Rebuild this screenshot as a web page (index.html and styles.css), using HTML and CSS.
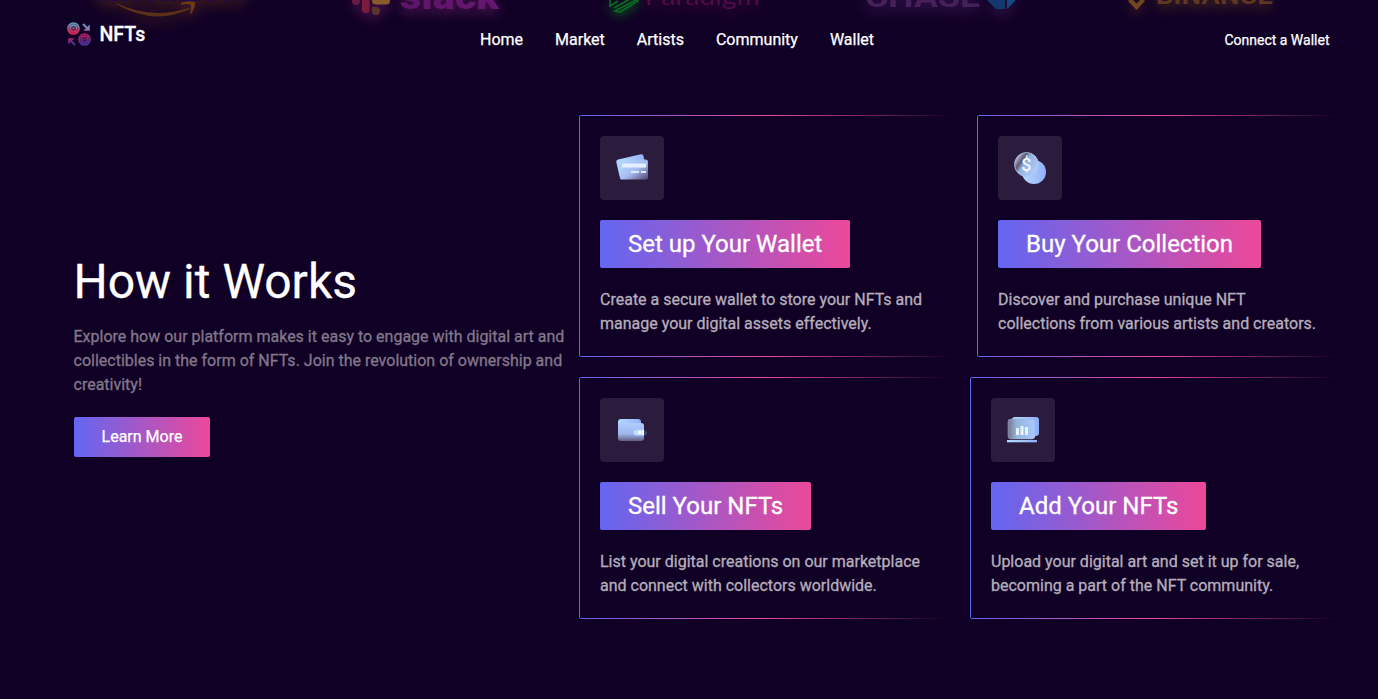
FILE: index.html
```html
<!DOCTYPE html>
<html lang="en">
<head>
<meta charset="utf-8">
<title>NFTs</title>
<link rel="stylesheet" href="styles.css">
</head>
<body>
<svg class="brands" width="1378" height="60" viewBox="0 0 1378 60">
  <defs>
    <linearGradient id="fadeSlack" x1="0" y1="0" x2="1" y2="0"><stop offset="0" stop-color="#5c1568"/><stop offset="1" stop-color="#681670"/></linearGradient>
  </defs>
  <g class="glow-amazon">
    <text x="97" y="1" font-size="40" font-weight="700" textLength="148" lengthAdjust="spacingAndGlyphs" fill="#1f084b">amazon</text>
    <path d="M116 3Q152 20 188 8Q190 7 190 9Q153 26 116 4Z" fill="#5b3019"/>
    <path d="M181 3Q188 0 195 2Q196 8 190 15Q191 9 191 5Q187 3 181 5Z" fill="#6b3a17"/>
  </g>
  <g class="glow-slack">
    <circle cx="356" cy="1" r="4" fill="#6b1a44"/>
    <rect x="362" y="-8" width="7.500" height="21" rx="3.500" fill="#7a1d3d"/>
    <rect x="372" y="-4" width="18" height="8.500" rx="4" fill="#8b5a2a"/>
    <path d="M372 7h4a4 4 0 1 1-4 4z" fill="#5c3427"/>
    <text x="400" y="9" font-size="36" font-weight="900" textLength="99" lengthAdjust="spacingAndGlyphs" fill="url(#fadeSlack)">slack</text>
  </g>
  <g class="glow-green" fill="none" stroke="#0c6b22" stroke-width="1.700">
    <path d="M610 -2V6L618 1M614 8L637 -5M615 11L638 -1V1L620 12Z"/>
  </g>
  <text class="glow-paradigm" x="645" y="5" font-size="25" textLength="115" lengthAdjust="spacingAndGlyphs" fill="#520a49">Paradigm</text>
  <g class="glow-chase">
    <text x="865" y="7" font-size="30" font-weight="700" textLength="115" lengthAdjust="spacingAndGlyphs" fill="#45205b">CHASE</text>
    <path d="M987 0H1005V9H996Z" fill="#11386f"/><path d="M1007-5H1015V1L1007 9Z" fill="#134a85"/>
  </g>
  <g class="glow-binance" fill="#5d3722">
    <path d="M1128 1L1131-2L1136.500 3.500L1142-2L1145 1L1136.500 10Z" fill="#714520"/>
    <text x="1156" y="4" font-size="24" font-weight="700" textLength="117" lengthAdjust="spacingAndGlyphs">BINANCE</text>
  </g>
</svg>
<header class="header">
  <a class="logo">
    <svg width="24" height="24" viewBox="0 0 24 24" fill="none">
      <defs><linearGradient id="coinA" x1="0" y1="0" x2="0" y2="1"><stop offset="0" stop-color="#5aa5c8"/><stop offset=".6" stop-color="#b04a78"/><stop offset="1" stop-color="#e8254f"/></linearGradient>
      <linearGradient id="coinB" x1="0" y1="0" x2="0" y2="1"><stop offset="0" stop-color="#b01f62"/><stop offset="1" stop-color="#4a329c"/></linearGradient>
      <linearGradient id="arrA" x1="0" y1="0" x2="0" y2="1"><stop offset="0" stop-color="#549fc5"/><stop offset="1" stop-color="#a5689e"/></linearGradient></defs>
      <g stroke="url(#coinA)"><circle cx="6.500" cy="6.500" r="5.500" stroke-width="1.700" fill="#4a2350"/><circle cx="6.500" cy="6.500" r="3.300" stroke-width="1.800"/><circle cx="6.500" cy="6.500" r=".8"/></g>
      <g stroke="url(#coinB)"><circle cx="17.500" cy="17.500" r="5.500" stroke-width="1.700" fill="#38124a"/><circle cx="17.500" cy="17.500" r="3.300" stroke-width="1.800"/><circle cx="17.500" cy="17.500" r=".8"/></g>
      <path d="M16 2L21 7" stroke="url(#arrA)" stroke-width="2"/><path d="M22.800 2.500V8.800H16.500L18.500 6.800L20.800 4.500Z" fill="url(#arrA)"/>
      <path d="M8 23L3 18" stroke="#5b318d" stroke-width="2"/><path d="M1.200 22.500V16.200H7.500L5.500 18.200L3.200 20.500Z" fill="url(#coinB)"/>
    </svg>
    <span>NFTs</span>
  </a>
  <nav class="nav"><a>Home</a><a>Market</a><a>Artists</a><a>Community</a><a>Wallet</a></nav>
  <a class="connect">Connect a Wallet</a>
</header>
<main class="works">
  <section class="intro">
    <h1>How it Works</h1>
    <p>Explore how our platform makes it easy to engage with digital art and collectibles in the form of NFTs. Join the revolution of ownership and creativity!</p>
    <a class="button">Learn More</a>
  </section>
  <section class="cards">
    <div class="row row-first">
      <article class="card">
        <div class="icon"><svg width="32" height="32" viewBox="0 0 32 32">
          <defs><linearGradient id="blue" x1="0" y1="0" x2="1" y2="0"><stop offset="0" stop-color="#addcff"/><stop offset=".6" stop-color="#a3c1fb"/><stop offset="1" stop-color="#91adfa"/></linearGradient>
          <linearGradient id="glass" x1="0" y1="0" x2="1" y2="1"><stop offset="0" stop-color="#b8d9ff" stop-opacity=".5"/><stop offset=".55" stop-color="#a5bcf0"/><stop offset="1" stop-color="#51466e"/></linearGradient></defs>
          <g transform="translate(0 2)"><path d="M2 5.500L25 .2Q27-.2 27.500 2L31 19L5 25.500Q4 25 3.500 22L.3 8Q0 6 2 5.500Z" fill="url(#blue)"/>
          <rect x="4" y="5.500" width="28" height="20" rx="2.500" fill="url(#glass)"/>
          <rect x="6" y="9.500" width="24" height="4" fill="#e3efff"/><path d="M15 18h8M25 18h5" stroke="#dce9ff" stroke-width="1.800"/></g>
        </svg></div>
        <h2 class="title">Set up Your Wallet</h2>
        <p>Create a secure wallet to store your NFTs and manage your digital assets effectively.</p>
      </article>
      <article class="card">
        <div class="icon"><svg width="32" height="32" viewBox="0 0 32 32">
          <defs><linearGradient id="coin" x1="0" y1="0" x2="1" y2=".7"><stop offset="0" stop-color="#655d7b"/><stop offset=".2" stop-color="#aaa8bd"/><stop offset=".35" stop-color="#5d5775"/><stop offset=".5" stop-color="#95b2df"/><stop offset="1" stop-color="#b0cdfc"/></linearGradient></defs>
          <circle cx="20" cy="20" r="12" fill="url(#blue)"/><circle cx="12.500" cy="12.500" r="12" fill="url(#coin)" stroke="#aec6ec" stroke-width=".8"/>
          <text x="12.300" y="19" text-anchor="middle" font-size="18" font-weight="500" fill="#f0f7ff">$</text>
        </svg></div>
        <h2 class="title">Buy Your Collection</h2>
        <p>Discover and purchase unique NFT collections from various artists and creators.</p>
      </article>
    </div>
    <div class="row row-second">
      <article class="card">
        <div class="icon"><svg width="32" height="32" viewBox="0 0 32 32">
          <defs><linearGradient id="wallet" x1="0" y1="0" x2="0" y2="1"><stop offset="0" stop-color="#b0cbff"/><stop offset=".6" stop-color="#9cb8ed"/><stop offset="1" stop-color="#655d7f"/></linearGradient></defs>
          <rect x="2" y="5" width="23" height="20" rx="3" fill="url(#blue)"/><rect x="2" y="9" width="26" height="18" rx="3" fill="url(#wallet)"/>
          <circle cx="28.500" cy="19" r="2.500" fill="#4b77b0" opacity=".5"/><path d="M28 15.500H20.500a3 3 0 0 0 0 6H28Z" fill="#bcdcfd"/><path d="M22 17h3v3h-3zM26 16h2v5h-2z" fill="#fff"/>
        </svg></div>
        <h2 class="title">Sell Your NFTs</h2>
        <p>List your digital creations on our marketplace and connect with collectors worldwide.</p>
      </article>
      <article class="card">
        <div class="icon"><svg width="32" height="32" viewBox="0 0 32 32">
          <defs><linearGradient id="screen" x1="0" y1="0" x2="1" y2="0"><stop offset="0" stop-color="#77718c"/><stop offset=".3" stop-color="#94b4d8"/><stop offset="1" stop-color="#a7caff"/></linearGradient></defs>
          <rect x="5" y="3" width="27" height="19" rx="3" fill="url(#blue)"/><rect x="1" y="5" width="27" height="20" rx="3" fill="url(#screen)" stroke="#9eb2d8" stroke-width=".5"/>
          <path d="M9 14h3v7H9zM13.500 12h3v9h-3zM18 13h3v8h-3z" fill="#e7f3ff"/><path d="M0 26h30v2.300H0z" fill="url(#blue)"/>
        </svg></div>
        <h2 class="title">Add Your NFTs</h2>
        <p>Upload your digital art and set it up for sale, becoming a part of the NFT community.</p>
      </article>
    </div>
  </section>
</main>
</body>
</html>
```
FILE: styles.css
```css
* { box-sizing: border-box; }
body { margin: 0; height: 699px; overflow: hidden; background: #110026; color: #fff; font-family: Roboto, sans-serif; font-size: 16px; line-height: 24px; }
h1, h2, p { margin: 0; font-weight: 400; }
.brands { position: absolute; top: 0; left: 0; z-index: -1; }
.glow-amazon { filter: drop-shadow(0 4px 7px #5a2c19); }
.glow-slack { filter: drop-shadow(0 5px 6px #4d1550); }
.glow-green { filter: drop-shadow(0 4px 5px #08651d); }
.glow-paradigm { filter: drop-shadow(0 5px 6px #3d0638); font-family: Lato, sans-serif; }
.glow-chase { filter: drop-shadow(0 5px 7px #3d1955); }
.glow-binance { filter: drop-shadow(0 4px 6px #4a2a1c); }
.header { height: 79px; padding: 0 48px 0 67px; display: grid; grid-template-columns: 413px 1fr auto; align-items: center; }
.logo { display: flex; align-items: center; gap: 8.5px; padding-bottom: 12px; font-size: 19.5px; font-weight: 500; -webkit-text-stroke: .3px #fff; }
.logo span { padding-top: 2px; }
.nav { display: flex; gap: 32px; }
.nav, .connect { -webkit-text-stroke: .25px currentColor; }
.connect { font-size: 14px; padding-right: .5px; }
.works { display: flex; padding: 36px 40px 0 74px; height: 540px; }
.intro { width: 505px; height: 504px; display: flex; flex-direction: column; align-items: flex-start; justify-content: center; padding-bottom: 20px; }
.intro h1 { padding-top: 1px; margin-bottom: -1px; margin-left: -.5px; font-size: 48px; line-height: 48px; -webkit-text-stroke: .3px #fff; }
.intro p { width: 500px; margin-top: 20px; margin-left: -.5px; color: #827889; -webkit-text-stroke: .3px currentColor; }
.button { margin-top: 20px; width: 136px; height: 40px; line-height: 40px; text-align: center; border-radius: 2px; background: linear-gradient(90deg, #6366f1, #ec4899); -webkit-text-stroke: .25px #fff; }
.cards { width: 759px; display: grid; gap: 20px; align-content: start; }
.row { display: grid; gap: 20px; }
.row-first { grid-template-columns: 378px 361px; }
.row-second { grid-template-columns: 371px 368px; }
.card { position: relative; height: 242px; padding: 21px; display: flex; flex-direction: column; align-items: flex-start; gap: 20px; color: #b5afbb; }
.card::before { content: ""; position: absolute; inset: 0; padding: 1px; border-radius: 2px; background: linear-gradient(90deg, #6366f1, #ec4899 50%, transparent); mask: linear-gradient(#000 0 0) content-box exclude, linear-gradient(#000 0 0); }
.icon { width: 64px; height: 64px; display: grid; place-items: center; border-radius: 4px; background: #2b1b3d; }
.title { height: 48px; padding: 0 28px; line-height: 48px; font-size: 24px; color: #fff; border-radius: 2px; background: linear-gradient(90deg, #6366f1, #ec4899); -webkit-text-stroke: .3px #fff; }
.card p { -webkit-text-stroke: .3px currentColor; }
```
